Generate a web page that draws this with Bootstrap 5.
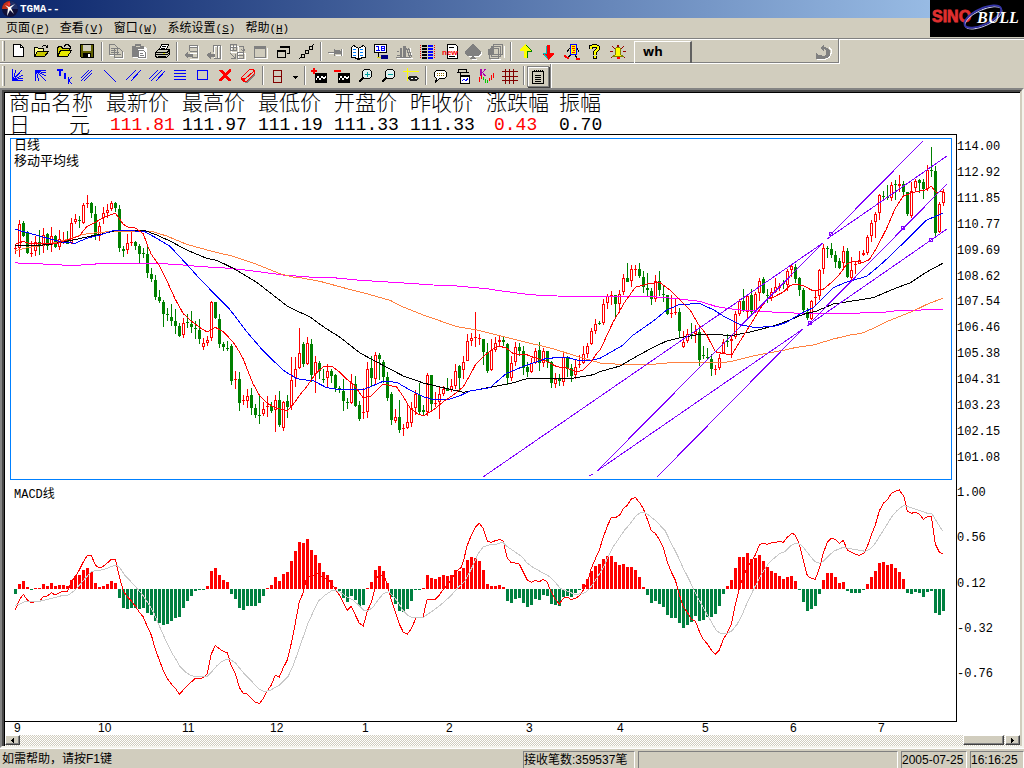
<!DOCTYPE html>
<html lang="zh-CN">
<head>
<meta charset="utf-8">
<meta name="viewport" content="width=device-width, initial-scale=1">
<title>TGMA--</title>
<link rel="stylesheet" href="https://cdn.jsdelivr.net/npm/bootstrap@5.3.0/dist/css/bootstrap.min.css">
<script src="https://cdn.jsdelivr.net/npm/bootstrap@5.3.0/dist/js/bootstrap.bundle.min.js"></script>
<style>
:root{--face:#d1cdbe;--cjk:"Liberation Sans","Noto Sans CJK SC",sans-serif;--mono:"Liberation Mono","Noto Sans CJK SC",monospace}
body{background:var(--face);color:#000;font:12px/14px var(--cjk)}
.titlebar{height:18px;background:linear-gradient(90deg,#0a246a,#a6caf0);color:#fff;font:bold 11px/18px var(--mono);padding-left:2px;gap:2px}
.brand-box{right:0;top:0;width:94px;height:37px;background:#000;z-index:5}
.menubar{height:20px;gap:10px;padding-left:6px}
.menubar a{color:#000;text-decoration:none;line-height:20px}
.menubar span{font-family:var(--mono);font-size:11px}
.strips{border-top:1px solid #808080;box-shadow:inset 0 1px #fff}
.strip{height:25px;padding:2px 0 0 7px;position:relative}
.strip::before{content:"";position:absolute;left:2px;top:2px;bottom:2px;width:3px;border-left:1px solid #fff;border-right:1px solid #808080}
.strip-a{width:840px;border-right:1px solid #fff;border-bottom:1px solid #fff;box-shadow:inset -1px -1px #808080}
.strip-b{width:552px;height:24px;padding-top:1px;border-right:1px solid #fff;box-shadow:inset -1px 0 #808080}
.tool{width:23px;height:23px;padding:3px;border:0;background:none;line-height:0}
.tool svg{width:17px;height:17px;display:block;fill:none;shape-rendering:crispEdges}
.tool.drop{width:13px;padding:3px 0}
.tool.drop svg{width:13px}
.tool.pressed{border:1px solid #808080;box-shadow:inset 1px 1px #fff,1px 1px #404040;padding:2px;width:22px;height:21px;margin-top:1px}
.sep{width:6px;height:19px;margin-top:1px;padding-left:2px}
.sep::before{content:"";display:block;height:100%;width:2px;border-left:1px solid #808080;border-right:1px solid #fff}
.code{width:58px;height:22px;border:0;border-left:1px solid #fff;border-top:1px solid #fff;border-right:2px solid #606060;background:none;font:bold 13px/18px "Open Sans","Noto Sans",sans-serif;padding:0 0 3px 8px;border-radius:0;margin-left:5px;outline:0}
.shrink{min-height:0}
.frame-out{border:2px solid #848484;border-right-color:#f4f3ec;border-bottom-color:#f4f3ec}
.frame-in{border:2px solid #484848;border-right-color:var(--face);border-bottom:0}
.sheet{background:#fff;border-left:1px solid #000;border-top:1px solid #000}
.quote-wrap{height:42px;border-bottom:1px solid #000}
.quotes{border-collapse:collapse;table-layout:fixed;width:604px}
.quotes th,.quotes td{padding:0;height:20px;white-space:nowrap;vertical-align:top;font:300 21px/20px "Noto Sans CJK SC",sans-serif}
.quotes th{line-height:17px}
.quotes td.num{font:18px/24px var(--mono)}
.rise{color:#f00}
.plot{border-right:1px solid #000;border-bottom:1px solid #000}
.plot svg{position:absolute;inset:0;width:100%;height:100%;shape-rendering:crispEdges}
.tag{left:9px;font:13px/16px var(--mono)}
.tag-ma{top:3px}
.tag-macd{top:60%;font-size:12px}
.scale{width:63px;font:12px/24px var(--mono);padding-top:42px}
.scale ol{list-style:none;margin:0;padding:0;display:flex;flex-direction:column;justify-content:space-between}
.scale li{height:24px;white-space:nowrap}
.span-price{flex:335 1 0}
.span-gap{flex:11 1 0}
.span-macd{flex:205 1 0}
.span-rest{flex:36 1 0}
.months{display:grid;grid-template-columns:9fr 84fr 84fr 88fr 92fr 84fr 80fr 91fr 85fr 88fr 88fr 142fr;line-height:13px;height:13px}
.scroller{height:11px;background:repeating-conic-gradient(var(--face) 0 25%,#fff 0 50%) 0 0/2px 2px}
.scroller button{height:10px;border:1px solid #fff;border-right-color:#404040;border-bottom-color:#404040;background:var(--face);padding:0;line-height:0;box-shadow:inset -1px -1px #808080}
.scroller .arrow{width:15px}
.scroller .thumb{width:41px;margin-right:1px}
.scroller svg{display:block;margin:auto;width:5px;height:5px;shape-rendering:crispEdges}
.statusbar{height:20px;padding-top:2px;border-top:1px solid #fff;gap:3px;line-height:17px;white-space:nowrap}
.pane{border-left:1px solid #808080;border-top:1px solid #808080;border-right:1px solid #fff}
.hint{flex:1 1 0;padding-left:2px}
.pane-count{width:112px}
.pane-blank{width:260px}
.pane-date{width:66px}
.pane-time{width:54px}
</style>
</head>
<body class="vh-100 d-flex flex-column overflow-hidden position-relative">
<header>
<div class="titlebar d-flex align-items-center">
<svg width="16" height="16" viewBox="0 0 16 16" aria-hidden="true"><circle cx="8" cy="8" r="8" fill="#101038"/><path d="M0 8A8 8 0 0 1 8 0L8 8Z" fill="#c03018"/><path d="M8 0A8 8 0 0 1 16 8H9Z" fill="#203068"/><path d="M3 4l4 2 6-3-4 4 3 6-4-4-3 6 1-8z" fill="#fff"/><circle cx="7" cy="3" r="1.500" fill="#f33"/></svg><span>TGMA--</span>
</div>
<nav class="menubar d-flex">
<a href="#">页面<span>(<u>P</u>)</span></a><a href="#">查看<span>(<u>V</u>)</span></a><a href="#">窗口<span>(<u>W</u>)</span></a><a href="#">系统设置<span>(<u>S</u>)</span></a><a href="#">帮助<span>(<u>H</u>)</span></a>
</nav>
<div class="brand-box position-absolute">
<svg width="94" height="37" viewBox="0 0 94 37" role="img" aria-label="SINOBULL"><text x="2" y="22" font-family="Liberation Sans" font-weight="bold" font-size="16" fill="#e03030" stroke="#e03030" stroke-width=".8">SINO</text><ellipse cx="53" cy="18" rx="20" ry="8" fill="none" stroke="#c8c8f0" transform="rotate(-25 53 17)"/><ellipse cx="53" cy="16.500" rx="20" ry="8" fill="none" stroke="#3434a8" stroke-width="1.800" transform="rotate(-25 53 17)"/><text x="47" y="23" font-family="Liberation Serif" font-weight="bold" font-style="italic" font-size="16" fill="#fff">BULL</text></svg>
</div>
<div class="strips">
<div class="strip strip-a d-flex align-items-start">
<button class="tool" aria-label="新建"><svg viewBox="0 0 17 17"><path d="M3.500 .5h7l3 3v9h-10z" fill="#fff" stroke="#000"/><path d="M10.500 .5v3h3" stroke="#000"/></svg></button>
<button class="tool" aria-label="打开"><svg viewBox="0 0 17 17"><path d="M1.500 12.500v-9h3l1 1h5v3" fill="#ffff90" stroke="#000"/><path d="M1.500 12.500l3-5h11l-4 5z" fill="#c8c800" stroke="#000"/><path d="M9 2.500h1M10 1.500h3M13 2.500h2M14.500 1v3M13 3.500h1" stroke="#000"/></svg></button>
<button class="tool" aria-label="打开页面"><svg viewBox="0 0 17 17"><path d="M1.500 12.500v-9l2-1h2l1 2h7v3" fill="#d0d000" stroke="#000"/><path d="M1.500 12.500l3-6h11l-4 6z" fill="#e8e800" stroke="#000"/><path d="M8 2.500l2-2h2l2 2v2" stroke="#000"/></svg></button>
<button class="tool" aria-label="保存"><svg viewBox="0 0 17 17"><path d="M1.500 .5h13v13h-12l-1-1z" fill="#606000" stroke="#000"/><path d="M4 1h8v6H4z" fill="#d1cdbe"/><path d="M4 9h8v5H4z" fill="#000"/><path d="M9 10h2v3H9z" fill="#fff"/></svg></button>
<span class="sep"></span>
<button class="tool" aria-label="复制"><svg viewBox="0 0 17 17"><path d="M2.500 1.500h5l3 3v7h-8zM7.500 5.500h5l3 3v6h-8z" stroke="#fff"/><path d="M1.500 .5h5l3 3v7h-8zM3 4.500h3M3 6.500h5M3 8.500h5M6.500 4.500h5l3 3v6h-8zM8 8.500h3M8 10.500h5" fill="#d1cdbe" stroke="#808080"/></svg></button>
<button class="tool" aria-label="粘贴"><svg viewBox="0 0 17 17"><path d="M3 3h12v1h1v11H7v-1H2V4z" fill="#fff"/><path d="M1 2h3V0h6v2h3v3H7v8H1z" fill="#808080"/><path d="M5 2h4" stroke="#d1cdbe"/><path d="M7.500 6.500h5l2 2v5h-7zM9 9.500h3M9 11.500h4" fill="#fff" stroke="#808080"/></svg></button>
<button class="tool" aria-label="打印"><svg viewBox="0 0 17 17"><path d="M5.500 5.500l2-5h7l-2 5z" fill="#fff" stroke="#000"/><path d="M8 2.500h4M7 4.500h4" stroke="#000"/><path d="M1.500 8.500l3-3h11v5l-3 3h-9l-2-1z" fill="#c8c8b8" stroke="#000"/><path d="M2 8.500h11l2-2M2 10.500h11l2-1M4 12h8" stroke="#000"/><path d="M9 9.500h2" stroke="#dd0"/></svg></button>
<span class="sep"></span>
<button class="tool" aria-label="左侧窗口"><svg viewBox="0 0 17 17"><path d="M7 2.500h8.500v13h-9M7 9.500h9" stroke="#fff"/><path d="M6.500 7V1.500h8v12h-6M7 7.500h7M7 3h7" stroke="#808080"/><path d="M1 11l4-3v2h5v3H5v2z" fill="#808080"/></svg></button>
<button class="tool" aria-label="分隔窗口"><svg viewBox="0 0 17 17"><path d="M8.500 15V2.500h7V16M12.500 2v13" stroke="#fff"/><path d="M7.500 8V1.500h7v13h-7M11.500 1v13" stroke="#808080"/><path d="M0 11l5-3v2h4v3H5v2z" fill="#808080"/></svg></button>
<button class="tool" aria-label="交换窗口"><svg viewBox="0 0 17 17"><path d="M2 2h7v6H2zM9 9h7v6H9z" stroke="#fff"/><path d="M1.500 .5h6v6h-6zM4.500 .5v6M1 3.500h7M8.500 8.500h6v6h-6zM8 11.500h7M10 2.500h4v4M12 5l2.500 2.500L16 5M1 9l5 5M6 10v4H2" stroke="#808080"/></svg></button>
<button class="tool" aria-label="最大化"><svg viewBox="0 0 17 17"><path d="M3 14.500h12.500V4" stroke="#fff"/><path d="M2.500 2.500h11v11h-11z" stroke="#808080"/><path d="M2 3.500h12" stroke="#808080" stroke-width="3"/></svg></button>
<button class="tool" aria-label="层叠"><svg viewBox="0 0 17 17"><path d="M5.500 2.500h9v7h-3M2.500 6.500h8v7h-8z" stroke="#000"/><path d="M5 3h10M2 7h9" stroke="#000" stroke-width="2"/></svg></button>
<button class="tool" aria-label="链接"><svg viewBox="0 0 17 17"><path d="M1 15l2-2M14 2l2-2M3.500 10.500h3v3h-3zM7.500 6.500h3v3h-3zM11.500 2.500h3v3h-3zM6 11l2-2M10 7l2-2" stroke="#000" stroke-width="1.200"/></svg></button>
<span class="sep"></span>
<button class="tool" aria-label="固定"><svg viewBox="0 0 17 17"><path d="M2 9.500h6M9 11.500h5M15.500 5v7" stroke="#fff"/><path d="M1 8.500h6M7.500 5v7" stroke="#808080"/><path d="M8 6h5v1h1V5h1v7h-1v-2H8z" fill="#808080"/></svg></button>
<button class="tool" aria-label="查阅"><svg viewBox="0 0 17 17"><path d="M1.500 3.500l2-2 2 1 3 2 3-2 2-1 2 2v10h-3l-4 2-4-2h-3z" fill="#fff" stroke="#000"/><path d="M8.500 4v11" stroke="#000"/><path d="M3 5l3 1M3 8l3 1M3 11l3 1M10 6l3-1M10 9l3-1M10 12l3-1" stroke="#0080ff"/></svg></button>
<button class="tool" aria-label="日程"><svg viewBox="0 0 17 17"><path d="M1.500 .5h12v8h-12z" fill="#fff" stroke="#000"/><path d="M3 2.500h2v4M3 6.500h4M8 2.500h3v4H8zM8 4.500h3" stroke="#00f"/><path d="M5.500 9v4H9" stroke="#000"/><path d="M8 11h7v4H8z" fill="#000080"/><path d="M4 13h4" stroke="#dd0"/></svg></button>
<button class="tool" aria-label="资料"><svg viewBox="0 0 17 17"><path d="M1 14.500h16M14 4l2 9" stroke="#fff"/><path d="M0 13.500h15M1 11.500h3M1 7.500h2M10.500 4l3 9M12.500 4l3 9" stroke="#808080"/><path d="M4 4h2v9H4zM7 2h3v11H7z" fill="#808080"/></svg></button>
<button class="tool" aria-label="报价列表"><svg viewBox="0 0 17 17"><path d="M1.500 1v14" stroke="#f00" stroke-dasharray="1 1"/><path d="M3 2h5M3 5h5M3 8h5M3 11h5M3 14h5" stroke="#000" stroke-width="2"/><path d="M9 2h5M9 5h5M9 8h5M9 11h5M9 14h5" stroke="#00f" stroke-width="2"/><path d="M15.500 1v14" stroke="#f00" stroke-dasharray="1 1"/></svg></button>
<button class="tool" aria-label="新闻"><svg viewBox="0 0 17 17"><path d="M5.500 .5h8l2 2v12h-10z" fill="#fff" stroke="#000"/><path d="M7 3.500h5M7 12.500h6" stroke="#000"/><text x="0" y="11" font-family="Liberation Sans" font-size="8" font-weight="bold" fill="#f00">new</text></svg></button>
<button class="tool" aria-label="黑桃"><svg viewBox="0 0 17 17"><path d="M9 1l8 7v3l-3 2h-4l2 3H7l2-3H5l-3-2V8z" fill="#fff"/><path d="M8 0l8 7v3l-3 2H9l2 3H5l2-3H3l-3-2V7z" fill="#808080"/></svg></button>
<button class="tool" aria-label="多页"><svg viewBox="0 0 17 17"><path d="M3 15.500h10M16.500 2v12" stroke="#fff"/><path d="M5.500 .5h9v10h-9zM3.500 2.500h9v10h-9zM1.500 6v8.500h9v-10h-5" stroke="#808080" fill="#d1cdbe"/><path d="M0 6l5-3v7H0zM4 12.500h5" fill="#808080" stroke="#808080"/></svg></button>
<span class="sep"></span>
<button class="tool" aria-label="上移"><svg viewBox="0 0 17 17"><path d="M8 0l6 6v1h-4v7H7V7H3V6z" fill="#ff0"/><path d="M9 1l5 5v1h-4v7" stroke="#008000"/></svg></button>
<button class="tool" aria-label="下移"><svg viewBox="0 0 17 17"><path d="M7 1h3v8h4v1l-6 6-5-6V9h4z" fill="#f00"/><path d="M6.500 2v7H3l5 6" stroke="#00c0c0"/></svg></button>
<button class="tool" aria-label="交易"><svg viewBox="0 0 17 17"><path d="M7.500 .5h6v10h-6z" fill="#ff0" stroke="#00f"/><path d="M9 2.500h3M9 4.500h3M10 6.500h2M9 8.500h3" stroke="#f00"/><path d="M7 4l-3 4M14 4l2 4M8 11l-4 3M12 11l2 3" stroke="#000"/><path d="M1 11.500l3 2M4 14h2M13 14.500h4" stroke="#f00" stroke-width="2"/></svg></button>
<button class="tool" aria-label="帮助"><svg viewBox="0 0 17 17"><path d="M5 5V3l2-1h3l2 1v2l-3 3v3M9 12v3" stroke="#000" stroke-width="4"/><path d="M5 5V3l2-1h3l2 1v2l-3 3v3M9 12v2" stroke="#ff0" stroke-width="2"/></svg></button>
<button class="tool" aria-label="提醒"><svg viewBox="0 0 17 17"><path d="M9 1v3M3 2l3 3M15 2l-3 3M1 7.500h3M14 7.500h3M2 14l2-2M16 14l-2-2" stroke="#900" stroke-width="1.200"/><path d="M6.500 10.500v-6l1-1h3l1 1v6l3 2h-11z" fill="#ff0" stroke="#808000"/><path d="M8 13h3v2H8z" fill="#f00"/></svg></button>
<input class="code" value="wh" aria-label="代码">
<button class="tool ms-auto me-1" aria-label="返回"><svg viewBox="0 0 17 17"><path d="M2 15.500h8l4-2 2-4v-4l-2-2" stroke="#fff"/><path d="M1 15V9l3 2 5 1 2-2V7L9 5v2L5 4l4-4v3l4 1 2 3v4l-3 3-4 1z" fill="#808080"/></svg></button>
</div>
<div class="strip strip-b d-flex align-items-start">
<button class="tool" aria-label="扇形线"><svg viewBox="0 0 17 17"><path d="M2.500 1v12M2 12.500h11M3 12l3-10M3 12l9-10M3 12l10-5M3 12l10-2" stroke="#00f"/></svg></button>
<button class="tool" aria-label="反扇形线"><svg viewBox="0 0 17 17"><path d="M2.500 2v11M2 2.500h11M3 3l3 10M3 3l10 10M3 3l10 5M3 3l10 2" stroke="#00f"/></svg></button>
<button class="tool" aria-label="文字"><svg viewBox="0 0 17 17"><path d="M1 1h6v2H5v5H3V3H1zM8 5h2v6H8z" fill="#00f"/><path d="M12.500 9v7M16 9l-3 3.500 3 3.500" stroke="#00f"/></svg></button>
<button class="tool" aria-label="平行线组"><svg viewBox="0 0 17 17"><path d="M2 10L10 2M2 13L13 2M5 13l8-8" stroke="#00f"/></svg></button>
<button class="tool" aria-label="直线"><svg viewBox="0 0 17 17"><path d="M2 2l12 12" stroke="#00f"/></svg></button>
<button class="tool" aria-label="双平行线"><svg viewBox="0 0 17 17"><path d="M1 12L11 2M6 13L16 2" stroke="#00f"/></svg></button>
<button class="tool" aria-label="三平行线"><svg viewBox="0 0 17 17"><path d="M1 11l9-9M3 13L14 2M8 13l9-10" stroke="#00f"/></svg></button>
<button class="tool" aria-label="水平线"><svg viewBox="0 0 17 17"><path d="M3 2.500h12M3 5.500h12M3 8.500h12M3 11.500h12" stroke="#00f"/></svg></button>
<button class="tool" aria-label="矩形"><svg viewBox="0 0 17 17"><path d="M3.500 2.500h10v9h-10z" stroke="#00f"/></svg></button>
<button class="tool" aria-label="删除"><svg viewBox="0 0 17 17"><path d="M2 2h3l3 3 4-4h2v2l-4 4 4 5v1h-3L8 9l-4 4H2v-2l4-4-4-4z" fill="#f00"/></svg></button>
<button class="tool" aria-label="橡皮"><svg viewBox="0 0 17 17"><path d="M5 15h3l7-8V3z" fill="#808080"/><path d="M1.500 9.500l8-8h3l2 1v3l-8 8h-3l-2-2z" fill="#d1cdbe" stroke="#f00"/><path d="M2 10l3 1 9-8" stroke="#f00"/><path d="M2 10l3 1v3H3z" fill="#f00"/></svg></button>
<span class="sep"></span>
<button class="tool" aria-label="日线"><svg viewBox="0 0 17 17"><path d="M4.500 2.500h8v12h-8zM5 8.500h8" stroke="#800000"/></svg></button>
<button class="tool drop" aria-label="选择周期"><svg viewBox="0 0 13 17"><path d="M4 8h5L6.500 11z" fill="#000"/></svg></button>
<span class="sep"></span>
<button class="tool" aria-label="加入指标"><svg viewBox="0 0 17 17"><path d="M4 5h12v10H4z" fill="#000"/><path d="M5 12l2-4 2 4 2-4 2 3 2-3" stroke="#fff"/><path d="M0 3h6M3 0v6" stroke="#f00" stroke-width="2"/></svg></button>
<button class="tool" aria-label="去掉指标"><svg viewBox="0 0 17 17"><path d="M4 5h12v10H4z" fill="#000"/><path d="M5 12l2-4 2 4 2-4 2 3 2-3" stroke="#fff"/><path d="M0 3h7" stroke="#f00" stroke-width="2"/></svg></button>
<button class="tool" aria-label="放大"><svg viewBox="0 0 17 17"><circle cx="10" cy="6" r="5" stroke="#000" fill="#e0f0f0"/><path d="M8 6.500h5M10.500 4v5" stroke="#00a0a0"/><path d="M6 10l-4 4" stroke="#000" stroke-width="2"/></svg></button>
<button class="tool" aria-label="缩小"><svg viewBox="0 0 17 17"><circle cx="10" cy="6" r="5" stroke="#000" fill="#e0f0f0"/><path d="M8 6.500h5" stroke="#00a0a0"/><path d="M6 10l-4 4" stroke="#000" stroke-width="2"/></svg></button>
<button class="tool" aria-label="十字光标"><svg viewBox="0 0 17 17"><path d="M0 3.500h16M4.500 0v13" stroke="#ff0"/><path d="M4 10l3-2h6l3 2-3 3H8z" fill="#222"/><path d="M8 10h2v1H8zM12 10h2v1h-2z" fill="#fff"/></svg></button>
<span class="sep"></span>
<button class="tool" aria-label="注释"><svg viewBox="0 0 17 17"><path d="M4.500 2.500h8l2 2v4l-2 2h-5l-4 4 1-4-2-2v-4z" fill="#fff" stroke="#000"/><path d="M5 5.500h8M5 7.500h8" stroke="#886600" stroke-dasharray="1 1"/></svg></button>
<button class="tool" aria-label="打印图表"><svg viewBox="0 0 17 17"><path d="M3.500 1.500h8v3h-8zM2 4.500h12M5 5v3h3" stroke="#000"/><path d="M5.500 7.500h9v8h-9z" fill="#fff" stroke="#000"/><path d="M5 8h10" stroke="#000" stroke-width="2"/><path d="M7 13l2-2 2 2 2-3" stroke="#00f"/></svg></button>
<button class="tool" aria-label="K线"><svg viewBox="0 0 17 17"><path d="M2 1h2v7H2zM4 4h1v1H4zM5 3h1V1h2v1H7v1H6v1H5zM5 5h1v1h1v1h1v1H6V7H5z" fill="#a0a"/><path d="M1.500 9v5M3.500 7v4M13.500 7v5M15.500 5v5M11.500 10v3" stroke="#f00"/><path d="M5.500 9v3M7.500 11v4M9.500 12v3" stroke="#0c0"/></svg></button>
<button class="tool" aria-label="网格"><svg viewBox="0 0 17 17"><path d="M4.500 1v15M8.500 1v15M12.500 1v15M1 3.500h16M1 8.500h16M1 12.500h16" stroke="#800000"/></svg></button>
<span class="sep"></span>
<button class="tool pressed" aria-label="记事"><svg viewBox="0 0 17 17"><path d="M2.500 2.500h11v12h-11z" stroke="#000"/><path d="M4 2h9" stroke="#000" stroke-width="2" stroke-dasharray="1 1"/><path d="M5 6.500h6M5 8.500h6M5 10.500h6M5 12.500h6" stroke="#000"/></svg></button>
</div>
</div>
</header>

<main class="frame-out shrink flex-grow-1 d-flex flex-column">
<div class="frame-in shrink flex-grow-1 d-flex flex-column">
<div class="sheet shrink flex-grow-1 d-flex flex-column">
<div class="shrink d-flex flex-grow-1">
<div class="flex-grow-1 d-flex flex-column">
<div class="quote-wrap">
<table class="quotes">
<colgroup><col style="width:101px"><col style="width:76px"><col style="width:76px"><col style="width:76px"><col style="width:76px"><col style="width:76px"><col style="width:73px"><col style="width:50px"></colgroup>
<thead><tr><th><span class="ps-1">商品名称</span></th><th>最新价</th><th>最高价</th><th>最低价</th><th>开盘价</th><th>昨收价</th><th>涨跌幅</th><th>振幅</th></tr></thead>
<tbody><tr><td><div class="d-flex justify-content-between ps-1 pe-3"><span>日</span><span class="me-n1">元</span></div></td><td class="num rise"><span class="ps-1">111.81</span></td><td class="num">111.97</td><td class="num">111.19</td><td class="num">111.33</td><td class="num">111.33</td><td class="num rise"><span class="ps-2">0.43</span></td><td class="num">0.70</td></tr></tbody>
</table>
</div>
<div class="plot shrink flex-grow-1 position-relative">
<svg id="chart" viewBox="5 135 951 586" preserveAspectRatio="none" role="img" aria-label="日线与MACD"></svg>
<div class="tag tag-ma position-absolute">日线<br>移动平均线</div>
<div class="tag tag-macd position-absolute">MACD线</div>
</div>
</div>
<div class="scale flex-shrink-0 d-flex flex-column">
<ol class="span-price shrink"><li>114.00</li><li>112.92</li><li>111.85</li><li>110.77</li><li>109.69</li><li>108.62</li><li>107.54</li><li>106.46</li><li>105.38</li><li>104.31</li><li>103.23</li><li>102.15</li><li>101.08</li></ol>
<div class="span-gap"></div>
<ol class="span-macd shrink"><li>1.00</li><li>0.56</li><li>0.12</li><li>-0.32</li><li>-0.76</li></ol>
<div class="span-rest"></div>
</div>
</div>
<div class="months"><span></span><span>9</span><span>10</span><span>11</span><span>12</span><span>1</span><span>2</span><span>3</span><span>4</span><span>5</span><span>6</span><span>7</span></div>
<div class="scroller d-flex">
<button class="arrow me-auto" aria-label="向左"><svg viewBox="0 0 5 5"><path d="M4 0v5L1 2.500z"/></svg></button>
<button class="thumb" aria-label="滚动块"></button>
<button class="arrow" aria-label="向右"><svg viewBox="0 0 5 5"><path d="M1 0v5l3-2.500z"/></svg></button>
</div>
</div>
</div>
</main>
<footer class="statusbar d-flex">
<div class="hint">如需帮助，请按F1键</div>
<div class="pane pane-count">接收笔数:359537笔</div>
<div class="pane pane-blank"></div>
<div class="pane pane-date">2005-07-25</div>
<div class="pane pane-time">16:16:25</div>
</footer>

<script>
// Chart geometry is stored in thirds of a plot unit, relative to each segment's origin.
const chart = document.getElementById('chart');
const NS = 'http://www.w3.org/2000/svg';
const add = (tag, attrs) => {
  const el = document.createElementNS(NS, tag);
  for (const k in attrs) el.setAttribute(k, attrs[k]);
  chart.appendChild(el);
};

// One candle every 4 units: colour, high, body top, body bottom, low.
const candles = [
[135, `r327,340,342,356 r255,268,340,365 g258,264,304,306 g288,294,353,356 r318,354,356,367 r303,321,348,362 g284,321,333,360 r280,300,333,354 g294,296,333,346 r277,303,330,350
g300,303,337,339 r285,312,335,346 r292,318,320,327 g288,315,326,328 r249,264,324,328 r237,252,260,268 g243,255,257,279 r203,210,264,268 r180,204,206,220 g201,204,234,250
g213,237,300,315 r262,274,302,318 r216,234,250,266 r207,225,233,249 r198,204,222,228 g200,204,219,230 g210,222,339,350 g333,342,348,366 r297,324,345,357 r290,320,322,333
g318,320,333,345 g327,332,356,386 g340,355,357,368 g337,356,413,428 g399,416,432,440 g420,434,486,494 g465,486,498,504 g495,501,536,576 g520,537,539,558 g507,545,558,572
g522,558,573,596 g564,573,604,606 r549,565,599,608 g537,561,564,579 g529,566,576,593 g558,578,581,612 g552,584,612,627 r610,624,635,644 r602,614,623,632 r498,502,610,617
g500,502,549,552 g537,551,627,639 g621,627,636,648 g618,638,640,648 g628,632,737,750 r708,732,735,762 g711,732,803,828 r780,796,798,810 r762,782,798,818 g760,780,819,840
g807,819,840,849 g777,840,842,867 r800,823,838,843 r783,812,815,846 g801,813,828,834 r780,795,825,890 g768,795,869,876 r798,801,878,888 g780,798,815,849 r666,735,813,825
r666,702,730,755 r579,654,700,703 g621,627,687,696 r606,624,686,690 g612,627,720,740 r663,682,716,774 g678,684,708,732 g703,732,735,744 r688,709,728,756`],
[240, `g387,393,408,428 g402,404,444,455 g437,444,447,458 g418,453,482,512 g474,486,488,506 r402,429,488,491 g408,432,498,500 g483,495,537,543 r445,516,518,537 r366,387,515,533
g348,383,413,437 r336,346,416,434 g339,344,356,420 g360,366,411,428 g396,411,473,482 g456,461,540,555 r507,532,542,549 g480,530,570,579 r552,564,567,588 r495,545,564,567
r486,504,548,560 r450,461,503,525 g429,465,516,524 g495,510,516,525 r399,405,515,528 g404,405,491,510 r456,489,491,500 r441,462,485,537 r438,447,461,467 g414,446,452,454
r417,438,449,455 r372,392,437,447 g375,378,414,453 r348,366,389,416 r282,303,362,364 r278,294,302,317 r215,291,294,321 r283,294,297,314 g296,298,335,375 g309,335,393,399
r297,330,390,393 r290,309,330,336 r285,300,305,322 g291,300,305,318 g309,312,413,434 r348,368,413,422 r305,321,365,378 g309,321,333,347 g318,333,383,404 g366,381,396,410
r354,368,395,399 r324,333,368,372 g306,330,369,393 r324,333,369,381 g333,333,366,384 g363,366,429,444 r399,417,431,444 g402,416,422,438 r336,351,425,437 g348,353,387,411
g372,384,408,425 r360,382,405,416 r345,372,375,383 r317,342,369,371 r309,318,342,354 r263,273,311,314 r237,252,273,281 g243,249,252,254 r177,191,248,255 r162,169,188,207
r153,165,167,195 g165,166,191,231 r150,162,191,218 r102,114,155,165 g69,114,125,126`],
[135, `r390,402,438,456 r390,402,404,423 g384,402,423,429 g409,426,456,473 g415,459,465,484 g459,468,492,510 r420,438,492,500 g408,438,465,484 g450,477,480,500 g480,480,537,540
r480,534,537,549 r492,531,534,540 g520,531,588,605 r588,620,635,640 r582,597,618,624 g564,597,600,612 r570,588,597,624 g579,590,674,693 g633,660,663,671 g639,665,668,675
g657,671,702,723 r690,703,705,719 r657,668,698,704 r612,620,655,657 g597,617,620,635 r602,612,617,668 r527,537,605,612 r493,497,536,543 g462,497,527,531 r477,483,530,548
g463,480,531,537 r471,477,531,534 r429,437,475,497 g426,432,474,476 g462,480,483,503 r459,470,488,497 r429,456,471,474 r443,452,459,468 g435,444,448,462 r402,408,450,468
r390,392,405,426 g387,396,432,443 g426,429,465,483 g459,464,525,532 g519,530,549,555 r495,498,551,554 r467,487,490,510 r402,405,482,495 r327,339,401,416 g333,340,342,368
g324,342,360,368 g348,360,381,399 g369,378,399,402 r333,348,384,399 g338,348,426,429 r366,405,428,437 r381,387,390,416 r348,376,386,388 r345,354,359,363 r300,306,353,359
r255,264,302,320 r231,237,260,308 r177,179,233,255 g168,183,185,195 g150,185,188,194 r142,150,188,197 g135,147,150,195 r120,147,152,171 g138,147,171,180 g171,171,237,242
r141,168,242,248 r132,137,159,168 g132,135,144,174 g132,141,161,192 r90,105,162,168 g36,104,108,126 g93,108,293,308 r200,208,290,293 r162,172,203,212`]
];

// MACD histogram bar ends; the zero line sits at 327.
const histogram = [342,312,303,321,330,324,324,312,318,309,318,315,315,318,300,288,285,270,264,276,309,321,318,312,303,309,354,384,387,384,384,387,384,399,405,423,429,435,432,423,414,411,384,363,348,333,330,330,318,273,264,285,300,306,342,357,384,390,378,378,378,369,348,324,315,291,303,282,276,243,213,186,189,177,210,225,249,276,285,300,321,333,354,366,348,360,378,375,324,306,270,258,273,309,351,372,393,396,387,363,330,330,324,285,294,297,291,285,288,285,270,273,264,240,231,234,243,270,312,318,318,315,321,363,369,357,354,369,381,375,357,360,345,348,372,375,378,351,348,351,339,330,312,297,273,258,252,237,228,228,246,255,252,261,261,270,291,321,345,369,363,372,381,405,414,414,429,444,435,426,408,423,420,411,411,402,378,342,318,300,264,231,231,219,237,234,225,243,261,273,279,288,297,291,288,303,330,366,393,387,378,342,300,279,279,291,309,306,333,339,339,339,330,312,291,273,249,246,255,252,264,276,297,339,342,336,339,351,336,333,399,405,393];

const A = [0,135], B = [300,240], C = [600,135];
const D = [0,480], E = [320,480], F = [640,480];
const averages = [
['#f0f', [A,'46,383 60,385 110,386 185,390 230,391 300,386 470,385 540,389 590,394 690,400 760,408 850,420'], [B,'40,112 100,113 180,121 280,127 400,135 460,137 560,146 600,152 690,164 770,168 890,170'], [C,'0,484 160,485 230,491 300,499 350,515 410,524 480,529 550,533 650,536 840,533 900,526 1028,524']],
['#ff8040', [A,'46,347 82,338 118,333 160,324 214,310 250,298 300,292 350,289 455,289 500,303 560,328 640,350 700,364 760,384 840,416 880,426'], [B,'0,113 60,124 130,143 200,161 270,181 310,201 370,225 470,260 530,270 600,287 700,312 760,326 830,349 880,363'], [C,'0,684 90,690 160,688 210,683 360,684 400,678 450,665 500,655 550,646 590,637 640,630 700,612 750,600 785,595 820,580 860,560 940,528 985,506 1028,490']],
['#000', [A,'46,331 100,333 150,328 215,316 270,304 310,296 345,287 436,287 470,300 510,318 560,345 620,370 650,376 700,400 770,442 860,512 890,527'], [B,'0,217 30,231 70,260 120,292 180,339 240,371 310,408 370,429 420,441 490,457 540,448 590,438 640,428 680,416 810,416 880,404'], [C,'0,710 60,693 110,664 160,637 200,618 240,608 300,598 400,601 450,591 520,573 570,555 610,538 650,528 700,507 820,488 890,458 930,444 980,411 1028,385']],
['#00f', [A,'46,283 100,298 150,312 190,322 225,325 260,310 300,300 340,287 360,285 435,290 470,310 510,334 560,388 600,432 640,473 690,524 740,590 790,648 850,706 890,731'], [B,'10,419 40,422 80,443 120,449 190,449 250,424 290,427 330,450 370,470 400,479 445,479 480,467 510,453 570,443 590,425 620,400 680,375 740,355 800,352 840,362 880,360'], [C,'0,670 70,630 100,600 160,558 200,525 240,508 300,506 340,524 370,543 420,569 460,577 520,575 560,562 600,537 640,518 700,458 740,441 800,424 850,382 900,334 950,285 980,255 1028,235']],
['#f00', [A,'46,328 70,319 94,327 130,325 170,325 205,314 238,303 260,275 286,262 310,248 330,240 346,235 358,250 370,268 384,276 406,279 430,296 442,330 454,358 478,392 502,440 526,493 550,536 574,558 600,578 622,591 646,577 670,590 700,622 718,650 730,672 746,714 760,748 778,780 802,805 826,818 862,828 886,800'], [B,'0,464 20,440 46,402 70,380 94,378 118,395 140,418 160,432 190,474 214,468 236,445 250,432 290,441 310,470 330,504 354,522 370,528 400,510 430,485 460,465 490,440 514,398 526,375 550,350 574,330 598,318 620,325 640,341 680,344 700,352 740,364 770,380 800,384 830,396 850,390 874,365 890,340'], [C,'0,646 40,560 75,500 106,457 150,445 180,443 210,465 240,495 270,524 295,568 320,600 346,650 370,656 396,659 412,632 430,603 454,565 480,522 502,492 520,487 550,471 570,452 586,447 610,452 640,468 670,463 700,438 720,416 740,388 760,378 790,382 808,374 830,338 860,280 886,220 910,183 940,172 980,164 994,154 1008,172 1028,170']]
];
const macd = [
['#f00', [D,'46,390 58,360 70,343 82,360 94,369 106,365 118,365 130,350 142,348 154,338 166,345 178,338 190,334 202,335 214,305 226,290 238,270 250,246 262,226 274,226 286,255 298,264 310,259 322,249 334,238 346,238 358,290 370,333 382,350 394,363 406,378 418,397 430,411 442,440 454,465 466,508 478,540 490,572 502,596 514,612 526,625 538,643 550,630 562,617 574,606 586,595 602,595 612,592 622,582 634,522 646,497 658,506 670,514 682,518 694,558 706,580 718,622 730,640 742,642 754,655 766,666 778,671 790,655 802,632 814,615 826,586 838,591 850,563 862,540 874,490 886,430 898,365 910,338 918,300 926,291 940,287 952,281'], [E,'10,293 25,298 34,310 46,327 58,345 70,368 82,391 94,379 106,405 118,430 130,438 142,393 154,368 166,322 172,290 182,284 194,290 202,315 214,361 226,396 238,432 250,457 262,463 274,446 288,414 310,411 316,381 322,358 346,358 358,345 370,328 382,316 400,288 412,272 424,262 432,238 440,200 454,166 466,142 478,130 490,146 502,183 514,187 526,182 540,178 550,184 562,235 574,248 586,249 598,252 610,276 622,300 634,307 646,301 658,305 670,298 682,306 690,328 706,358 718,372 730,355 742,351 754,359 766,355 778,348 790,330 802,310 814,265 826,237 838,210 850,172 862,138 874,113 888,112 900,104 910,85 922,76 934,57 946,52'], [F,'0,70 10,86 22,118 34,152 46,160 58,178 70,203 82,246 94,276 106,300 118,343 130,380 142,397 154,418 166,423 178,454 190,478 202,492 214,510 226,523 238,510 250,478 262,458 274,432 286,375 298,325 310,290 322,260 334,246 346,225 358,195 370,189 382,193 394,189 406,187 420,184 430,187 442,172 456,160 466,165 478,193 490,240 502,287 514,295 526,298 538,265 550,220 562,187 574,175 586,178 598,190 610,181 622,210 634,217 646,223 658,226 672,219 682,200 694,165 706,135 718,93 730,70 742,60 754,40 766,34 778,30 792,50 802,93 814,100 826,97 838,102 850,118 862,110 874,110 880,150 886,192 898,216 908,221']],
['#c8c8c8', [D,'46,376 60,372 76,364 94,366 118,364 150,356 185,347 205,345 226,330 250,302 262,288 276,274 300,271 320,266 334,259 350,256 360,264 374,285 394,306 410,324 430,348 446,372 462,400 478,438 496,478 514,516 526,535 540,560 556,576 574,587 590,590 620,590 634,577 650,558 664,545 680,538 692,540 706,548 718,563 734,583 750,598 764,614 778,627 794,635 812,630 838,616 850,604 864,590 880,555 896,510 910,470 924,430 940,395 956,363'], [E,'0,359 16,345 34,333 46,331 60,336 80,350 100,361 118,377 132,392 146,390 158,383 174,360 190,341 206,335 222,350 236,370 250,393 264,407 275,412 310,412 324,402 346,387 370,368 394,346 412,325 434,304 450,275 462,250 474,222 490,200 510,194 530,192 548,187 562,200 580,212 606,230 620,248 636,260 662,275 682,285 694,295 706,307 720,324 740,333 764,343 790,341 802,333 816,316 834,289 850,262 864,232 880,200 896,176 914,150 930,132 946,110 958,100'], [F,'8,96 22,102 44,120 62,138 76,153 94,190 112,225 130,265 148,300 164,335 184,372 202,405 214,425 228,450 244,462 262,460 276,452 292,432 306,405 320,372 340,330 350,310 366,280 386,250 404,233 420,220 434,215 450,199 466,190 480,193 494,207 508,225 524,244 538,250 550,244 568,225 584,212 610,202 640,208 676,214 690,208 706,190 718,170 736,142 754,112 772,91 790,77 806,81 840,92 862,100 876,101 890,125 908,153']]
];

function polyline([color, ...segments]) {
  const points = segments.map(([[ox, oy], s]) => s.split(' ').map(p => {
    const [x, y] = p.split(',');
    return (ox + x / 3).toFixed(1) + ',' + (oy + y / 3).toFixed(1);
  }).join(' ')).join(' ');
  add('polyline', {points, fill: 'none', stroke: color});
}

add('rect', {x: 10.5, y: 138.5, width: 941, height: 341, fill: '#fff', stroke: '#0080ff'});

let x = 15;
for (const [base, rows] of candles) {
  for (const row of rows.split(/\s+/)) {
    const up = row[0] === 'r', color = up ? '#f00' : '#008000';
    const [hi, top, bottom, lo] = row.slice(1).split(',').map(v => Math.round(v / 3) + base);
    const h = Math.max(1, bottom - top);
    add('rect', {x, y: hi, width: 1, height: Math.max(1, lo - hi), fill: color});
    add('rect', {x: x - 1, y: top, width: 3, height: h, fill: color});
    if (up && h > 2) add('rect', {x, y: top + 1, width: 1, height: h - 2, fill: '#fff'});
    x += 4;
  }
}
averages.forEach(polyline);

// Hand-drawn trend channels and their anchor points.
for (const points of ['483,477 823,243', '597,471 823,243', '597,471 803,329', '657,477 803,329', '589,476 593,474',
  '807,326 947,229', '807,326 947,184', '827,239 947,156', '830,235 923,141'])
  add('polyline', {points, fill: 'none', stroke: '#8000ff'});
for (const [cx, cy] of [[831,234],[810,323],[903,228],[931,240]])
  add('circle', {cx, cy, r: 2, fill: 'none', stroke: '#8000ff'});

histogram.forEach((v, i) => {
  const end = Math.round(v / 3) + 480;
  add('rect', {x: 14 + 4 * i, y: Math.min(end, 589), width: 3, height: Math.max(1, Math.abs(end - 589)), fill: v < 327 ? '#f00' : '#008040'});
});
macd.forEach(polyline);
</script>
</body>
</html>
